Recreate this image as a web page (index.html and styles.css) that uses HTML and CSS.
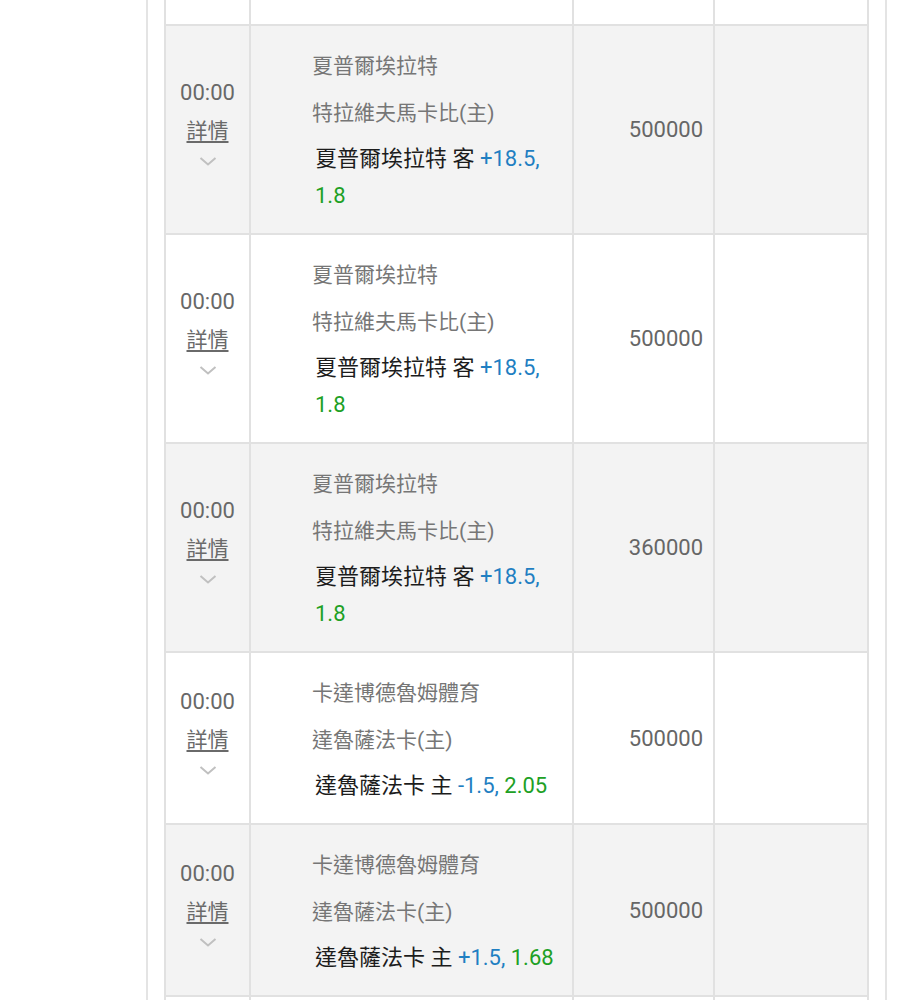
FILE: index.html
```html
<!DOCTYPE html>
<html lang="zh-Hant">
<head>
<meta charset="utf-8">
<title>注單</title>
<link rel="stylesheet" href="styles.css">
</head>
<body>
<div class="panel">
  <div class="table">
    <div class="row row-top">
      <div class="cell c1"></div><div class="cell c2"></div><div class="cell c3"></div><div class="cell c4"></div>
    </div>

    <div class="row alt">
      <div class="cell c1"><div class="time">00:00</div><a class="detail">詳情</a><svg class="chev" width="18" height="10" viewBox="0 0 18 10"><polyline points="1.5,2 9,8.5 16.5,2"/></svg></div>
      <div class="cell c2"><div class="name">夏普爾埃拉特</div><div class="name">特拉維夫馬卡比(主)</div><div class="bet">夏普爾埃拉特 客 <span class="hc">+18.5,</span> <span class="odds">1.8</span></div></div>
      <div class="cell c3">500000</div>
      <div class="cell c4"></div>
    </div>

    <div class="row">
      <div class="cell c1"><div class="time">00:00</div><a class="detail">詳情</a><svg class="chev" width="18" height="10" viewBox="0 0 18 10"><polyline points="1.5,2 9,8.5 16.5,2"/></svg></div>
      <div class="cell c2"><div class="name">夏普爾埃拉特</div><div class="name">特拉維夫馬卡比(主)</div><div class="bet">夏普爾埃拉特 客 <span class="hc">+18.5,</span> <span class="odds">1.8</span></div></div>
      <div class="cell c3">500000</div>
      <div class="cell c4"></div>
    </div>

    <div class="row alt">
      <div class="cell c1"><div class="time">00:00</div><a class="detail">詳情</a><svg class="chev" width="18" height="10" viewBox="0 0 18 10"><polyline points="1.5,2 9,8.5 16.5,2"/></svg></div>
      <div class="cell c2"><div class="name">夏普爾埃拉特</div><div class="name">特拉維夫馬卡比(主)</div><div class="bet">夏普爾埃拉特 客 <span class="hc">+18.5,</span> <span class="odds">1.8</span></div></div>
      <div class="cell c3">360000</div>
      <div class="cell c4"></div>
    </div>

    <div class="row">
      <div class="cell c1"><div class="time">00:00</div><a class="detail">詳情</a><svg class="chev" width="18" height="10" viewBox="0 0 18 10"><polyline points="1.5,2 9,8.5 16.5,2"/></svg></div>
      <div class="cell c2"><div class="name">卡達博德魯姆體育</div><div class="name">達魯薩法卡(主)</div><div class="bet">達魯薩法卡 主 <span class="hc">-1.5,</span> <span class="odds">2.05</span></div></div>
      <div class="cell c3">500000</div>
      <div class="cell c4"></div>
    </div>

    <div class="row alt">
      <div class="cell c1"><div class="time">00:00</div><a class="detail">詳情</a><svg class="chev" width="18" height="10" viewBox="0 0 18 10"><polyline points="1.5,2 9,8.5 16.5,2"/></svg></div>
      <div class="cell c2"><div class="name">卡達博德魯姆體育</div><div class="name">達魯薩法卡(主)</div><div class="bet">達魯薩法卡 主 <span class="hc">+1.5,</span> <span class="odds">1.68</span></div></div>
      <div class="cell c3">500000</div>
      <div class="cell c4"></div>
    </div>

    <div class="row row-next">
      <div class="cell c1"></div><div class="cell c2"></div><div class="cell c3"></div><div class="cell c4"></div>
    </div>
  </div>
</div>
</body>
</html>
```
FILE: styles.css
```css
html, body {
  margin: 0;
  padding: 0;
  background: #ffffff;
  font-family: "Roboto", "Noto Sans CJK TC", sans-serif;
}

.panel {
  margin-left: 146px;
  width: 741px;
  padding: 0 16px;
  box-sizing: border-box;
  border-left: 2px solid #e4e4e4;
  border-right: 2px solid #e4e4e4;
  min-height: 1000px;
  background: #ffffff;
}

.table {
  width: 705px;
  box-sizing: border-box;
  border-left: 2px solid #e1e1e1;
}

.row {
  display: grid;
  grid-template-columns: 85px 323px 141px 154px;
  border-bottom: 2px solid #e1e1e1;
  background: #ffffff;
}

.row.alt {
  background: #f3f3f3;
}

.row-top {
  height: 24px;
}

.row-next {
  height: 120px;
}

.cell {
  box-sizing: border-box;
  border-right: 2px solid #e1e1e1;
}

.c1 {
  display: flex;
  flex-direction: column;
  align-items: center;
  justify-content: center;
  padding-bottom: 19px;
}

.time {
  font-size: 22px;
  line-height: 38px;
  color: #686868;
}

.detail {
  font-size: 21px;
  line-height: 38px;
  color: #6a6a6a;
  text-decoration: underline;
  text-underline-offset: 3px;
}

.chev {
  margin-top: 6px;
  display: block;
}

.chev polyline {
  fill: none;
  stroke: #c0c0c0;
  stroke-width: 2;
}

.c2 {
  padding: 25px 10px 19px 61px;
}

.name {
  font-size: 21px;
  line-height: 30px;
  color: #767676;
  margin-bottom: 17px;
}

.name + .name {
  margin-bottom: 12px;
}

.bet {
  font-size: 22px;
  line-height: 37px;
  color: #1c1c1c;
  padding-left: 3px;
}

.hc {
  color: #1f7fc2;
}

.odds {
  color: #20a024;
}

.c3 {
  display: flex;
  align-items: center;
  justify-content: flex-end;
  padding-right: 10px;
  font-size: 22px;
  color: #666666;
}
```
